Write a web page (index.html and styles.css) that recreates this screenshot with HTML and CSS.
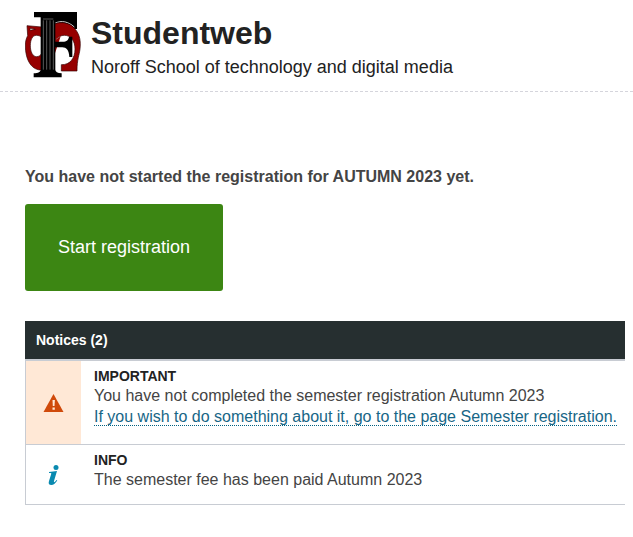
FILE: index.html
```html
<!DOCTYPE html>
<html lang="en">
<head>
  <meta charset="UTF-8">
  <meta name="viewport" content="width=device-width, initial-scale=1.0">
  <title>Studentweb</title>
  <link rel="stylesheet" href="styles.css">
</head>
<body>
  <header class="header">
    <svg class="logo" viewBox="30 21 168 198" aria-hidden="true">
      <path fill="#960000" stroke="#300" stroke-width="2" fill-rule="evenodd" d="M36 62 L80 66 V195 C52 196 31 169 31 120 C31 110 34 99 38 92 Z M64 91 C52 91 46 105 46 122 C46 140 53 155 65 155 C72 155 77 150 80 146 V98 C76 93 71 91 64 91 Z M45 70 V76 L61 73 Z"/>
      <path fill="#000" d="M57 21 H186 V72 H176 L150 58 H118 V37 H57 Z"/>
      <path fill="none" stroke="#ddd" stroke-width="3" d="M119 55 C140 45 160 50 178 66"/>
      <path fill="#960000" stroke="#300" stroke-width="2" d="M118 57 C140 48 168 54 182 74 C194 90 198 108 195 132 C193 150 186 162 186 198 H139 V179 C165 180 180 160 180 132 C180 108 168 91 148 91 C136 91 127 98 118 109 Z"/>
      <path fill="#960000" d="M117 108 L137 94 L118 151 Z"/>
      <path fill="#000" d="M118 110 H143 C155 110 161 104 162 95 H172 V156 H163 C162 135 154 127 142 127 H118 Z"/>
      <path fill="#000" d="M77 33 H121 V194 C121 200 127 204 140 205 V217 H56 V205 C70 204 77 200 77 194 Z"/>
      <path fill="none" stroke="#888" stroke-width="2" d="M85 46 V194 M95 46 V194 M105 46 V194 M115 46 V194 M84 42 H115"/>
    </svg>
    <div>
      <h1 class="title">Studentweb</h1>
      <p class="school">Noroff School of technology and digital media</p>
    </div>
  </header>

  <main class="content">
    <p class="status">You have not started the registration for AUTUMN 2023 yet.</p>
    <button type="button" class="start-button">Start registration</button>

    <section class="notices">
      <h2 class="notices-title">Notices (2)</h2>
      <div class="notice">
        <div class="notice-icon warning">
          <svg width="21" height="18" viewBox="0 0 20 18" aria-hidden="true">
            <path fill="#d04a0b" d="M10 0 L20 18 H0 Z"/>
            <path fill="#ffe8d6" d="M9 6 H11.400 L11 12 H9.300 Z M9 13.500 H11.300 V15.700 H9 Z"/>
          </svg>
        </div>
        <div class="notice-text">
          <h3>IMPORTANT</h3>
          <p>You have not completed the semester registration Autumn 2023</p>
          <p class="action"><a href="#">If you wish to do something about it, go to the page Semester registration.</a></p>
        </div>
      </div>
      <div class="notice">
        <div class="notice-icon">
          <svg width="11" height="20" viewBox="0 0 11 20" aria-hidden="true">
            <circle cx="8" cy="2.500" r="2.500" fill="#0a8ab0"/>
            <path fill="#0a8ab0" d="M1 7 L9 6 L6 16 C5.600 18 6.500 17.500 8.500 15 L9.300 15.600 C7 19 5.500 20 3.500 20 C.8 20 .2 18.500 1 16 L3.300 8.800 C3.500 7.900 2.800 7.900 1 8 Z"/>
          </svg>
        </div>
        <div class="notice-text">
          <h3>INFO</h3>
          <p>The semester fee has been paid Autumn 2023</p>
        </div>
      </div>
    </section>
  </main>
</body>
</html>
```
FILE: styles.css
```css
* {
  box-sizing: border-box;
}

body {
  margin: 0;
  background-color: #fff;
  color: #444;
  font-family: Arial, "Liberation Sans", sans-serif;
  font-size: 16px;
}

h1, h2, h3, p {
  margin: 0;
}

.header {
  display: flex;
  gap: 10px;
  padding: 12px 25px 11px;
  border-bottom: 1px dashed #d5d5dc;
  color: #222;
}

.logo {
  width: 56px;
  height: 66px;
}

.title {
  font-size: 32px;
  line-height: 42px;
}

.school {
  font-size: 18px;
  line-height: 26px;
}

.content {
  padding: 75px 8px 32px 25px;
}

.status {
  font-weight: bold;
  line-height: 20px;
}

.start-button {
  display: block;
  margin-top: 17px;
  padding: 33px;
  border: none;
  border-radius: 3px;
  background-color: #3c8613;
  color: #fff;
  font-family: inherit;
  font-size: 18px;
  line-height: 21px;
  cursor: pointer;
}

.notices {
  margin-top: 30px;
}

.notices-title {
  padding: 9px 11px;
  background-color: #262f30;
  border-bottom: 2px solid #c8ccd3;
  color: #fff;
  font-size: 14px;
  line-height: 20px;
}

.notice {
  display: flex;
  border-left: 1px solid #c8ccd3;
  border-bottom: 1px solid #c8ccd3;
}

.notice-icon {
  display: flex;
  align-items: center;
  justify-content: center;
  width: 55px;
  flex-shrink: 0;
}

.warning {
  background-color: #ffe8d6;
}

.notice-text {
  padding: 6px 0 14px 13px;
  line-height: 21px;
}

.notice-text h3 {
  color: #222;
  font-size: 14px;
  line-height: 18px;
}

.action {
  padding-bottom: 3px;
}

.action a {
  border-bottom: 1px dotted #006080;
  color: #176686;
  text-decoration: none;
}
```
